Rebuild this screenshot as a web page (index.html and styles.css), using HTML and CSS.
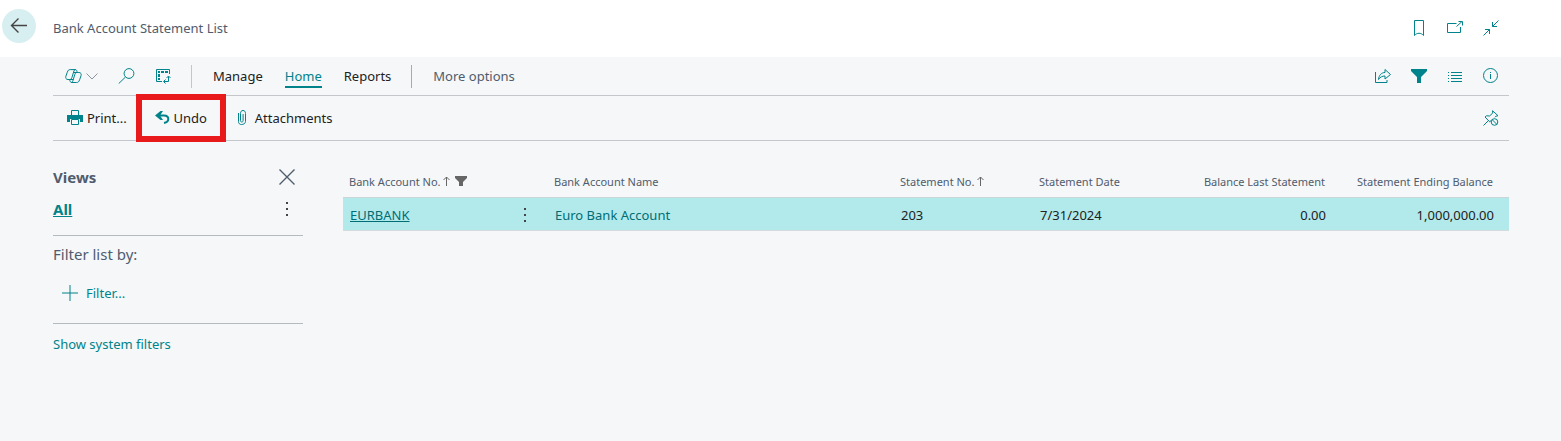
FILE: index.html
```html
<!DOCTYPE html>
<html lang="en">
<head>
    <meta charset="utf-8">
    <title>Bank Account Statement List</title>
    <link rel="stylesheet" href="styles.css">
</head>
<body>
<header class="page-header">
    <button class="btn-back" aria-label="Back">
        <svg width="18" height="16" viewBox="0 0 18 16"><path stroke-width="1.400" d="M17 7.500H2M8.500 .5L1.500 7.500l7 7"/></svg>
    </button>
    <h1 class="page-title">Bank Account Statement List</h1>
    <div class="header-icons">
        <button class="btn-icon" aria-label="Bookmark">
            <svg width="16" height="16" viewBox="0 0 16 16"><path d="M3.500 .5h9v15c-2.500-3-6.500-3-9 0z"/></svg>
        </button>
        <button class="btn-icon" aria-label="Open in new window">
            <svg width="16" height="16" viewBox="0 0 16 16"><path d="M9.500 3.500h-9v9h13V7M9.500 6.500l5.500-5M11.500 1.500h4v4"/></svg>
        </button>
        <button class="btn-icon" aria-label="Collapse">
            <svg width="16" height="16" viewBox="0 0 16 16"><path d="M15.500 .5l-6 6M9.500 2v4.500H14M.5 15.500l6-6M2 9.500h4.500V14"/></svg>
        </button>
    </div>
</header>
<main class="page-main">
    <nav class="toolbar">
        <button class="btn-icon btn-copilot" aria-label="Copilot">
            <svg width="17" height="15" viewBox="0 0 17 15"><path d="M4.500 10.500H3C1 10.500.3 9 .9 7.200l1.400-4C3 1.300 3.700.6 5.200.6h5c1.400 0 1.600.9 2 2.900h1.700c2 0 2.700 1.500 2.100 3.300l-1.400 4c-.7 2-1.500 2.700-3 2.700H6.800c-1.400 0-1.700-1-2.300-3zM4.500 10.500c1.600 0 2-.6 2.500-2.200L8.600 3c.4-1.500.9-2.400 2-2.400M12.200 3.500c-1.600 0-2 .8-2.500 2.300l-1.500 5c-.4 1.500-.8 2.700-2 2.700M8.300 3.500h4M4.500 10.500h4"/></svg>
            <svg class="icon-grey" width="12" height="8" viewBox="0 0 12 8"><path d="M.5 1.500L6 7l5.500-5.500"/></svg>
        </button>
        <button class="btn-icon btn-search" aria-label="Search">
            <svg width="17" height="16" viewBox="0 0 17 16"><circle cx="11" cy="5.500" r="4.900"/><path d="M7.500 9L.7 15.600"/></svg>
        </button>
        <button class="btn-icon btn-analyze" aria-label="Analyze">
            <svg width="16" height="16" viewBox="0 0 16 16"><path d="M14.500 6V1.500H1.500v12H7"/><path class="fill" d="M3 3h2v2H3zM6 3h3v2H6zM10 3h3v2h-3zM3 6h2v3H3zM3 10h2v2H3z"/><path d="M9 13.500h4.500v-5M10.500 11.500l-2 2 2 2M11.500 10l2-2 2 2"/></svg>
        </button>
        <span class="divider"></span>
        <div class="tabs">
            <button class="tab">Manage</button>
            <button class="tab tab-active">Home</button>
            <button class="tab">Reports</button>
        </div>
        <span class="divider divider-dark"></span>
        <button class="tab tab-more">More options</button>
        <div class="toolbar-right">
            <button class="btn-icon" aria-label="Share">
                <svg width="16" height="16" viewBox="0 0 16 16"><path d="M.5 4v10.500h11.500V12M3.500 11.500C4 7 6.500 4.500 10 4.500v-3l5.500 5-5.500 4.500V8C7.500 8 5 9 3.500 11.500z"/></svg>
            </button>
            <button class="btn-icon" aria-label="Filter">
                <svg width="16" height="16" viewBox="0 0 16 16"><path class="fill" d="M0 1h16v2l-6 6v6H6V9L0 3z"/></svg>
            </button>
            <button class="btn-icon" aria-label="List layout">
                <svg width="16" height="16" viewBox="0 0 16 16"><path d="M1 4.500h1M4 4.500h11M1 7.500h1M4 7.500h11M1 10.500h1M4 10.500h11M1 13.500h1M4 13.500h11"/></svg>
            </button>
            <button class="btn-icon" aria-label="Information">
                <svg width="16" height="16" viewBox="0 0 16 16"><circle cx="7.500" cy="7.500" r="7"/><path d="M7.500 6v5M7.500 4v1"/></svg>
            </button>
        </div>
    </nav>
    <div class="actions">
        <button class="action action-print">
            <svg width="16" height="16" viewBox="0 0 16 16"><path class="fill" d="M0 5h16v7h-3V9H3v3H0z"/><path d="M4.500 5V.5h7V5M4.500 9.500h7v5h-7z"/></svg>
            Print...
        </button>
        <button class="action action-undo">
            <svg width="15" height="14" viewBox="0 0 15 14"><path class="stroke-bold" d="M2 4.500h7c2.800 0 4.300 1.300 4.300 3.500S12 11.500 9 12"/><path class="fill" d="M5.500 0H8L5 4.500 8 9H5.500L0 4.500z"/></svg>
            Undo
        </button>
        <button class="action action-attach">
            <svg width="8" height="16" viewBox="0 0 8 16"><path d="M.5 3v8.500c0 2 1.200 3 3 3s4-1 4-3v-8c0-2-1-3-2.500-3s-2.500 1-2.500 3v7c0 1 .5 1.500 1.300 1.500s1.300-.5 1.300-1.500V4"/></svg>
            Attachments
        </button>
        <button class="btn-icon btn-pin" aria-label="Unpin">
            <svg width="16" height="16" viewBox="0 0 16 16"><path d="M.5 15.500l4.800-4.800M8 10.500l-1.300 1.300L2 7l1.500-1.200 3 .2 3.300-3L9.500.7l5.500 5-2.300.6-.8 1"/><circle cx="11.500" cy="12" r="3.300"/><path d="M9.200 9.700l4.600 4.600"/></svg>
        </button>
    </div>
    <div class="content">
        <aside class="sidebar">
            <div class="sidebar-row views-row">
                <h2 class="views-title">Views</h2>
                <button class="btn-icon btn-close" aria-label="Close">
                    <svg width="16" height="16" viewBox="0 0 16 16"><path stroke-width="1.400" d="M.5 .5l15 15M15.500 .5l-15 15"/></svg>
                </button>
            </div>
            <div class="sidebar-row all-row">
                <a class="view-all" href="#">All</a>
                <button class="btn-icon btn-dots" aria-label="View options">
                    <svg width="16" height="16" viewBox="0 0 16 16"><path class="fill" d="M7 1h2v2H7zM7 7h2v2H7zM7 13h2v2H7z"/></svg>
                </button>
            </div>
            <div class="filter-box">
                <p class="filter-label">Filter list by:</p>
                <button class="btn-filter">
                    <svg width="16" height="16" viewBox="0 0 16 16"><path d="M8 0v16M0 8h16"/></svg>
                    Filter...
                </button>
            </div>
            <a class="system-filters" href="#">Show system filters</a>
        </aside>
        <table class="list">
            <colgroup>
                <col class="col-no">
                <col>
                <col class="col-statement">
                <col class="col-date">
                <col class="col-balance">
                <col class="col-balance">
            </colgroup>
            <thead>
                <tr>
                    <th>Bank Account No.
                        <svg class="icon-sort" width="7" height="10" viewBox="0 0 7 10"><path d="M3.500 10V1M.5 4l3-3 3 3"/></svg>
                        <svg class="icon-funnel" width="12" height="10" viewBox="0 0 12 10"><path class="fill" d="M0 0h12v2L8 6v4H4V6L0 2z"/></svg>
                    </th>
                    <th>Bank Account Name</th>
                    <th>Statement No.
                        <svg class="icon-sort" width="7" height="10" viewBox="0 0 7 10"><path d="M3.500 10V1M.5 4l3-3 3 3"/></svg>
                    </th>
                    <th>Statement Date</th>
                    <th class="num">Balance Last Statement</th>
                    <th class="num">Statement Ending Balance</th>
                </tr>
            </thead>
            <tbody>
                <tr>
                    <td>
                        <div class="cell-no">
                            <a class="account-link" href="#">EURBANK</a>
                            <button class="btn-icon btn-dots" aria-label="Row options">
                                <svg width="16" height="16" viewBox="0 0 16 16"><path class="fill" d="M7 1h2v2H7zM7 7h2v2H7zM7 13h2v2H7z"/></svg>
                            </button>
                        </div>
                    </td>
                    <td class="account-name">Euro Bank Account</td>
                    <td>203</td>
                    <td>7/31/2024</td>
                    <td class="num">0.00</td>
                    <td class="num">1,000,000.00</td>
                </tr>
            </tbody>
        </table>
    </div>
</main>
</body>
</html>
```
FILE: styles.css
```css
*{
    box-sizing: border-box;
}
body{
    margin: 0;
    min-height: 100vh;
    background: #f5f7f9;
    color: #212121;
    font-family: "Noto Sans", "Open Sans", sans-serif;
    font-size: 13px;
    line-height: 20px;
}
button{
    padding: 0;
    border: 0;
    background: none;
    color: inherit;
    font: inherit;
    cursor: pointer;
}
a{
    color: #00838a;
}
svg{
    display: block;
    flex: none;
    fill: none;
    stroke: currentColor;
}
svg .fill{
    fill: currentColor;
    stroke: none;
}
svg .stroke-bold{
    stroke-width: 2;
}
.btn-icon{
    display: flex;
    align-items: center;
    color: #00838a;
}

/* header */
.page-header{
    display: flex;
    align-items: center;
    height: 57px;
    padding: 0 62px 2px 2px;
    background: #fff;
}
.btn-back{
    display: flex;
    align-items: center;
    justify-content: center;
    width: 34px;
    height: 34px;
    margin-bottom: 4px;
    border-radius: 50%;
    background: #d8eff1;
    color: #444;
}
.page-title{
    margin: 0 0 0 17px;
    color: #505c6d;
    font-size: 13px;
    font-weight: 400;
}
.header-icons,
.toolbar-right{
    display: flex;
    gap: 20px;
    margin-left: auto;
}

/* toolbar */
.page-main{
    padding: 0 52px 0 53px;
}
.toolbar{
    display: flex;
    align-items: center;
    height: 39px;
    border-bottom: 1px solid #c3c6ca;
}
.btn-copilot{
    gap: 4px;
    margin-left: 12px;
}
.icon-grey{
    color: #8b949e;
}
.btn-search,
.btn-analyze{
    margin-left: 20px;
}
.divider{
    width: 1px;
    height: 23px;
    margin: 0 21px 0 20px;
    background: #c3c6ca;
}
.divider-dark{
    background: #a5abb3;
}
.tabs{
    display: flex;
    gap: 22px;
}
.tab{
    height: 24px;
    padding-top: 2px;
    border-bottom: 2px solid transparent;
}
.tab-active{
    border-color: #00838a;
    color: #00838a;
}
.tab-more{
    color: #505c6d;
}
.toolbar-right,
.btn-pin{
    margin-right: 10px;
}

/* actions */
.actions{
    display: flex;
    align-items: center;
    height: 45px;
    border-bottom: 1px solid #c3c6ca;
}
.action{
    display: flex;
    align-items: center;
    gap: 4px;
}
.action svg{
    color: #00838a;
}
.action-print{
    margin-left: 14px;
}
.action-undo{
    justify-content: center;
    width: 90px;
    height: 48px;
    margin: 0 12px 0 9px;
    border: 6px solid #e81a1c;
}
.action-attach{
    gap: 9px;
}
.btn-pin{
    margin-left: auto;
}

/* sidebar */
.content{
    display: flex;
    align-items: flex-start;
    gap: 40px;
}
.sidebar{
    flex: none;
    width: 250px;
    padding-top: 22px;
}
.sidebar-row{
    display: flex;
    align-items: center;
    justify-content: space-between;
    padding-right: 8px;
}
.views-row{
    height: 28px;
}
.views-title{
    margin: 0;
    color: #505c6d;
    font-size: 15px;
}
.btn-close{
    color: #505c6d;
}
.btn-dots{
    color: #444;
}
.all-row{
    height: 36px;
}
.view-all{
    font-size: 15px;
    font-weight: 700;
}
.filter-box{
    margin-top: 8px;
    padding: 8px 0 20px;
    border-top: 1px solid #b5babf;
    border-bottom: 1px solid #b5babf;
}
.filter-label{
    margin: 0 0 19px;
    color: #505c6d;
    font-size: 15px;
}
.btn-filter{
    display: flex;
    align-items: center;
    gap: 8px;
    margin-left: 9px;
    color: #00838a;
}
.system-filters{
    display: block;
    margin-top: 10px;
    text-decoration: none;
}

/* list */
.list{
    flex: 1;
    width: 100%;
    border-collapse: collapse;
    table-layout: fixed;
}
.col-no{
    width: 205px;
}
.col-statement{
    width: 139px;
}
.col-date{
    width: 140px;
}
.col-balance{
    width: 168px;
}
.list th{
    height: 56px;
    padding: 26px 16px 0 6px;
    color: #505c6d;
    font-size: 11px;
    font-weight: 400;
    text-align: left;
    white-space: nowrap;
}
.list td{
    height: 33px;
    padding: 2px 15px 0 7px;
    border-top: 1px solid #c9d6d9;
    border-bottom: 1px solid #d5dadd;
    background: #b2eaec;
}
.list .num{
    text-align: right;
}
.icon-sort,
.icon-funnel{
    display: inline-block;
    color: #666;
}
.icon-funnel{
    margin-left: 2px;
}
.cell-no{
    display: flex;
    align-items: center;
    justify-content: space-between;
}
.account-link,
.account-name{
    color: #006d74;
}
```
